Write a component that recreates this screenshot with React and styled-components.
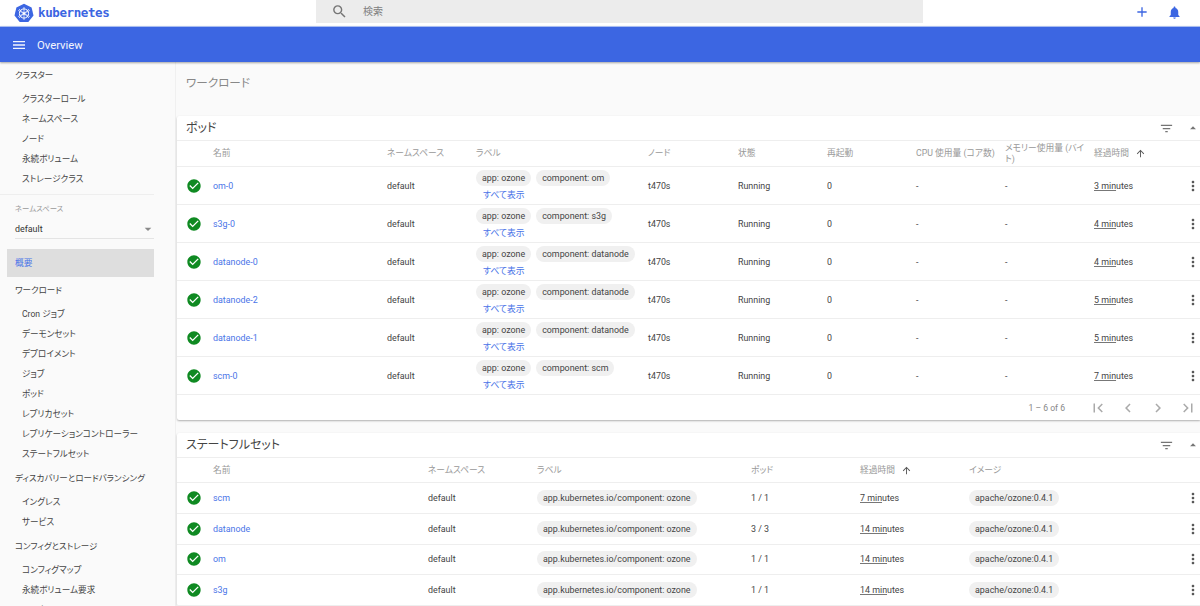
import React from 'react';
import styled, { createGlobalStyle } from 'styled-components';
import {
  MdAdd, MdArrowDropDown, MdArrowDropUp, MdArrowUpward, MdCheckCircle, MdChevronLeft, MdChevronRight,
  MdFilterList, MdFirstPage, MdLastPage, MdMenu, MdMoreVert, MdNotifications, MdSearch,
} from 'react-icons/md';

const Global = createGlobalStyle`
  html, body { margin: 0; padding: 0; height: 100%; overflow: hidden; }
  body {
    font-family: Roboto, "Noto Sans CJK JP", sans-serif;
    font-size: 8.9px;
    font-feature-settings: "palt";
    color: #444;
    background: #fafafa;
  }
`;

const Page = styled.div`
  height: 606px;
  width: 1200px;
  display: flex;
  flex-direction: column;
  overflow: hidden;
`;

const TopBar = styled.header`
  height: 26px;
  flex: none;
  background: #fff;
  display: flex;
  align-items: flex-start;
`;

const Brand = styled.div`
  width: 316px;
  height: 26px;
  display: flex;
  align-items: center;
  padding: 0 0 1px 14px;
  gap: 4px;
  box-sizing: border-box;
  color: #3c66e2;
  font-family: "DejaVu Sans Mono", monospace;
  font-size: 12.5px;
  font-weight: 700;
  letter-spacing: -0.4px;
`;

const Search = styled.div`
  width: 607px;
  height: 23px;
  background: #ececec;
  display: flex;
  align-items: center;
  padding: 0 0 2px 15px;
  box-sizing: border-box;
  color: #808080;
  font-size: 10px;
  gap: 15px;
  svg { font-size: 17px; color: #757575; margin-top: 2px; }
`;

const TopActions = styled.div`
  flex: 1;
  height: 24px;
  display: flex;
  align-items: center;
  justify-content: flex-end;
  gap: 17px;
  padding-right: 18px;
  color: #3c66e2;
  svg { font-size: 15px; }
  svg:first-child { font-size: 16px; }
`;

const ActionBar = styled.div`
  height: 35px;
  flex: none;
  background: #3c66e2;
  border-top: 1px solid #a9bdf0;
  box-shadow: 0 1px 2px rgba(0, 0, 0, 0.35);
  display: flex;
  align-items: center;
  padding-left: 11px;
  gap: 10px;
  color: #f2f5fd;
  font-size: 11.3px;
  line-height: 16px;
  position: relative;
  z-index: 2;
  svg { font-size: 16px; }
`;

const ActionTitle = styled.span`
  padding-top: 2px;
`;

const Body = styled.div`
  flex: 1;
  display: flex;
  min-height: 0;
`;

const Sidebar = styled.nav`
  width: 176px;
  flex: none;
  background: #fafafa;
  border-right: 1px solid #f0f0f0;
  box-sizing: border-box;
`;

const NavHeading = styled.div`
  height: 27px;
  line-height: 27px;
  padding-left: 15px;
  font-size: 8.5px;
  color: #444;
  margin-top: ${(p) => p.$gap || 0}px;
`;

const NavItem = styled.div`
  height: 20px;
  line-height: 20px;
  padding-left: 22px;
  font-size: 8.6px;
  color: #444;
`;

const NavDivider = styled.div`
  height: 1px;
  background: #eee;
  margin: 5px 21px 0 0;
`;

const NamespaceLabel = styled.div`
  margin: 8px 0 0 15px;
  font-size: 7.4px;
  line-height: 11px;
  color: #999;
`;

const NamespaceSelect = styled.div`
  margin: 5px 21px 0 15px;
  height: 20px;
  box-sizing: border-box;
  border-bottom: 1px solid #e4e4e4;
  display: flex;
  align-items: center;
  justify-content: space-between;
  font-size: 8.9px;
  color: #333;
  svg { font-size: 16px; color: #8a8a8a; margin-right: -2px; }
`;

const OverviewLink = styled.div`
  margin: 10px 21px 0 7px;
  height: 28px;
  line-height: 28px;
  padding-left: 8px;
  background: #dedede;
  color: #4a74e8;
  font-size: 8.75px;
`;

const Main = styled.main`
  flex: 1;
  min-width: 0;
  padding-left: 1px;
`;

const PageTitle = styled.h1`
  margin: 0 0 12px;
  padding: 12px 0 0 9px;
  height: 42px;
  box-sizing: border-box;
  font-size: 11.6px;
  font-weight: 400;
  line-height: 18px;
  color: #888;
`;

const Card = styled.section`
  background: #fff;
  border-radius: 2px 0 0 2px;
  box-shadow: 0 1px 2px rgba(0, 0, 0, 0.3);
  margin-bottom: 13px;
`;

const CardHead = styled.div`
  height: 25px;
  display: flex;
  align-items: center;
  padding-left: 9px;
  font-size: 12px;
  color: #444;
  border-bottom: 1px solid #eee;
  box-sizing: border-box;
`;

const CardTitle = styled.div`
  flex: 1;
  padding-bottom: 3px;
`;

const FilterIcon = styled(MdFilterList)`
  font-size: 15px;
  color: #757575;
  margin-right: 12px;
`;

const CollapseIcon = styled(MdArrowDropUp)`
  font-size: 14px;
  color: #757575;
`;

const Row = styled.div`
  display: grid;
  grid-template-columns: ${(p) => p.$cols};
  align-items: center;
  height: ${(p) => p.$height}px;
  border-bottom: 1px solid #eee;
  box-sizing: border-box;
`;

const HeadCell = styled.div`
  font-size: 8.75px;
  line-height: 11px;
  color: #999;
  display: flex;
  align-items: center;
  gap: 6px;
  padding-right: 9px;
  svg { font-size: 11px; color: #555; }
`;

const Status = styled(MdCheckCircle)`
  font-size: 16px;
  color: #0f8a22;
  margin-left: 9px;
`;

const NameLink = styled.a`
  color: #4a74e8;
  font-size: 8.9px;
`;

const Cell = styled.div`
  font-size: 8.9px;
  color: #444;
`;

const Age = styled.span`
  color: #444;
  u { text-underline-offset: 1px; text-decoration-color: #777; }
`;

const LabelCell = styled.div`
  padding-top: 1px;
`;

const ChipBox = styled.div`
  display: flex;
  flex-wrap: wrap;
  gap: 5px;
`;

const Chip = styled.span`
  display: inline-block;
  height: 16px;
  line-height: 16px;
  padding: 0 6px;
  background: #f0f0f0;
  border-radius: 8px;
  font-size: 8.9px;
  color: #444;
  white-space: nowrap;
`;

const ShowAll = styled.div`
  margin: 2px 0 0 7px;
  color: #4a74e8;
  font-size: 8.8px;
  line-height: 14px;
`;

const MenuIcon = styled(MdMoreVert)`
  font-size: 16px;
  color: #555;
  margin-left: 1px;
  display: block;
`;

const Footer = styled.div`
  height: 25px;
  display: flex;
  align-items: center;
  justify-content: flex-end;
  color: #888;
  font-size: 8.6px;
  padding-right: 3px;
`;

const Pager = styled.div`
  display: flex;
  gap: 12px;
  margin-left: 24px;
  svg { font-size: 18px; color: #aaa; display: block; }
`;

const K8sLogo = () => (
  <svg width="20" height="20" viewBox="0 0 20 20">
    <path d="M10 .8l7.6 3.6 1.9 8.1-5.2 6.6H5.7L.5 12.5l1.9-8.1z" fill="#3c66e2" />
    <g stroke="#fff" strokeWidth="1" fill="none">
      <circle cx="10" cy="10.5" r="4.6" />
      <path d="M10 4v13M4.2 7.4l11.6 6.2M15.8 7.4L4.2 13.6M5 15l10-9M15 15L5 6" strokeWidth=".7" />
    </g>
    <circle cx="10" cy="10.5" r="1.3" fill="#fff" />
  </svg>
);

const podCols = '36px 174px 89px 172px 90px 89px 89px 89px 89px 1fr 16px';
const setCols = '36px 215px 109px 214px 109px 109px 1fr 16px';

const pods = [
  ['om-0', 'component: om', '3'],
  ['s3g-0', 'component: s3g', '4'],
  ['datanode-0', 'component: datanode', '4'],
  ['datanode-2', 'component: datanode', '5'],
  ['datanode-1', 'component: datanode', '5'],
  ['scm-0', 'component: scm', '7'],
];

const sets = [
  ['scm', '1 / 1', '7'],
  ['datanode', '3 / 3', '14'],
  ['om', '1 / 1', '14'],
  ['s3g', '1 / 1', '14'],
];

const nav = [
  ['クラスター', ['クラスターロール', 'ネームスペース', 'ノード', '永続ボリューム', 'ストレージクラス']],
];

const nav2 = [
  ['ワークロード', ['Cron ジョブ', 'デーモンセット', 'デプロイメント', 'ジョブ', 'ポッド', 'レプリカセット', 'レプリケーションコントローラー', 'ステートフルセット']],
  ['ディスカバリーとロードバランシング', ['イングレス', 'サービス']],
  ['コンフィグとストレージ', ['コンフィグマップ', '永続ボリューム要求', 'シークレット']],
];

const NavGroups = ({ groups, gap }) => groups.map(([title, items], i) => (
  <div key={title}>
    <NavHeading $gap={i > 0 ? gap : 0}>{title}</NavHeading>
    {items.map((item) => <NavItem key={item}>{item}</NavItem>)}
  </div>
));

const Minutes = ({ n }) => (
  <Age><u>{n} min</u>utes</Age>
);

export default function App() {
  return (
    <Page>
      <Global />
      <TopBar>
        <Brand><K8sLogo />kubernetes</Brand>
        <Search><MdSearch />検索</Search>
        <TopActions><MdAdd /><MdNotifications /></TopActions>
      </TopBar>
      <ActionBar><MdMenu /><ActionTitle>Overview</ActionTitle></ActionBar>
      <Body>
        <Sidebar>
          <NavGroups groups={nav} gap={0} />
          <NavDivider />
          <NamespaceLabel>ネームスペース</NamespaceLabel>
          <NamespaceSelect>default<MdArrowDropDown /></NamespaceSelect>
          <OverviewLink>概要</OverviewLink>
          <NavGroups groups={nav2} gap={1} />
        </Sidebar>
        <Main>
          <PageTitle>ワークロード</PageTitle>
          <Card>
            <CardHead><CardTitle>ポッド</CardTitle><FilterIcon /><CollapseIcon /></CardHead>
            <Row $cols={podCols} $height={26}>
              <span />
              <HeadCell>名前</HeadCell>
              <HeadCell>ネームスペース</HeadCell>
              <HeadCell>ラベル</HeadCell>
              <HeadCell>ノード</HeadCell>
              <HeadCell>状態</HeadCell>
              <HeadCell>再起動</HeadCell>
              <HeadCell>CPU 使用量 (コア数)</HeadCell>
              <HeadCell>メモリー使用量 (バイト)</HeadCell>
              <HeadCell>経過時間 <MdArrowUpward /></HeadCell>
              <span />
            </Row>
            {pods.map(([name, label, age]) => (
              <Row key={name} $cols={podCols} $height={38}>
                <Status />
                <NameLink>{name}</NameLink>
                <Cell>default</Cell>
                <LabelCell>
                  <ChipBox><Chip>app: ozone</Chip><Chip>{label}</Chip></ChipBox>
                  <ShowAll>すべて表示</ShowAll>
                </LabelCell>
                <Cell>t470s</Cell>
                <Cell>Running</Cell>
                <Cell>0</Cell>
                <Cell>-</Cell>
                <Cell>-</Cell>
                <Cell><Minutes n={age} /></Cell>
                <MenuIcon />
              </Row>
            ))}
            <Footer>
              1 – 6 of 6
              <Pager><MdFirstPage /><MdChevronLeft /><MdChevronRight /><MdLastPage /></Pager>
            </Footer>
          </Card>
          <Card>
            <CardHead><CardTitle>ステートフルセット</CardTitle><FilterIcon /><CollapseIcon /></CardHead>
            <Row $cols={setCols} $height={25}>
              <span />
              <HeadCell>名前</HeadCell>
              <HeadCell>ネームスペース</HeadCell>
              <HeadCell>ラベル</HeadCell>
              <HeadCell>ポッド</HeadCell>
              <HeadCell>経過時間 <MdArrowUpward /></HeadCell>
              <HeadCell>イメージ</HeadCell>
              <span />
            </Row>
            {sets.map(([name, count, age]) => (
              <Row key={name} $cols={setCols} $height={30.75}>
                <Status />
                <NameLink>{name}</NameLink>
                <Cell>default</Cell>
                <div><Chip>app.kubernetes.io/component: ozone</Chip></div>
                <Cell>{count}</Cell>
                <Cell><Minutes n={age} /></Cell>
                <div><Chip>apache/ozone:0.4.1</Chip></div>
                <MenuIcon />
              </Row>
            ))}
          </Card>
        </Main>
      </Body>
    </Page>
  );
}
